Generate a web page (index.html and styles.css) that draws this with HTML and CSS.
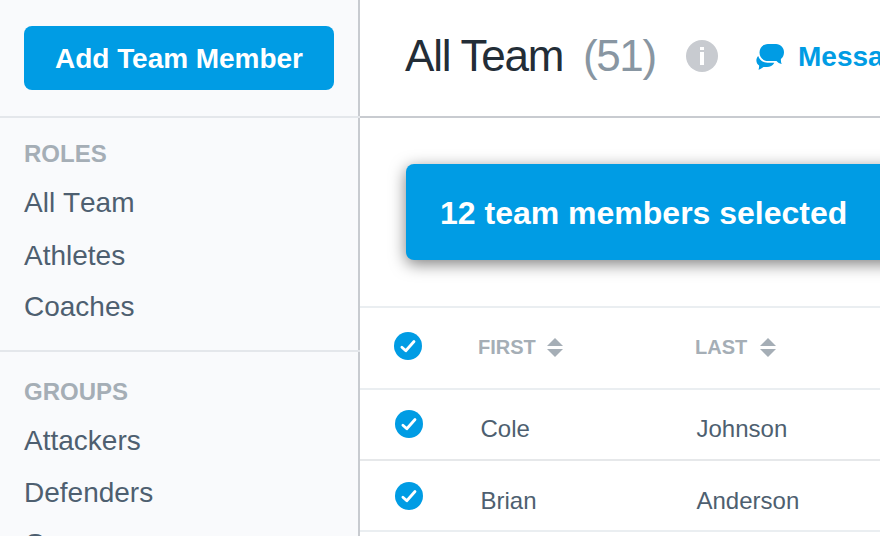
FILE: index.html
```html
<!DOCTYPE html>
<html lang="en">
<head>
<meta charset="utf-8">
<title>All Team</title>
<link rel="stylesheet" href="styles.css">
</head>
<body>
<svg class="defs" aria-hidden="true">
  <symbol id="check" viewBox="0 0 28 28"><circle cx="14" cy="14" r="14" fill="#009ce4"/><path d="M7.900 15.300l3.900 3.500 8.200-9.300" fill="none" stroke="#fff" stroke-width="2.800" stroke-linecap="round" stroke-linejoin="round"/></symbol>
  <symbol id="sort" viewBox="0 0 16 19"><path d="M8 0l8 8H0zM0 11h16l-8 8z" fill="#a5aeb6"/></symbol>
</svg>
<div class="app">
  <aside class="sidebar">
    <div class="add"><button class="add-button">Add Team Member</button></div>
    <section class="group roles">
      <h2>ROLES</h2>
      <a class="all">All Team</a>
      <a class="athletes">Athletes</a>
      <a>Coaches</a>
    </section>
    <section class="group">
      <h2>GROUPS</h2>
      <a>Attackers</a>
      <a class="defenders">Defenders</a>
      <a>Goons</a>
    </section>
  </aside>
  <main class="main">
    <header class="header">
      <h1>All Team</h1>
      <span class="count">(51)</span>
      <svg class="info" viewBox="0 0 32 32"><circle cx="16" cy="16" r="16" fill="#c8cbd0"/><path d="M14 7h4v3h-4zM14 12h4v13h-4z" fill="#fff"/></svg>
      <svg class="chat" viewBox="0 0 28 26"><path d="M12 0h8c4.600 0 8 3.700 8 8.300 0 2.900-1.200 5.300-3.100 6.800-.1 1.900.1 3.500.8 4.900-2.200-.4-3.900-1.500-5.200-3H12c-5 0-8.500-3.800-8.500-8.500S7 0 12 0z"/><path d="M2.200 12c1.300 4 4.800 6.700 9.300 6.700h6.800c-1.500 2.900-4.300 4.400-7.300 4.400H7.500c-1.400 1.200-3 2.200-5 2.700.5-1.500.7-2.900.6-4.300C.2 19.500-.8 15.200 2.200 12z"/></svg>
      <a class="message">Message</a>
    </header>
    <div class="notice"><div class="banner">12 team members selected</div></div>
    <div class="table">
      <div class="row head"><svg class="check"><use href="#check"/></svg><span class="first">FIRST<svg class="sort"><use href="#sort"/></svg></span><span class="last">LAST<svg class="sort"><use href="#sort"/></svg></span></div>
      <div class="row cole"><svg class="check"><use href="#check"/></svg><span class="first">Cole</span><span class="last">Johnson</span></div>
      <div class="row brian"><svg class="check"><use href="#check"/></svg><span class="first">Brian</span><span class="last">Anderson</span></div>
    </div>
  </main>
</div>
</body>
</html>
```
FILE: styles.css
```css
* { box-sizing: border-box; }
body { margin: 0; font-family: "Liberation Sans", Arial, sans-serif; background: #fff; color: #4e5f70; }
svg { display: block; flex: none; }
.defs { display: none; }
.app { display: flex; width: 880px; height: 536px; overflow: hidden; }

.sidebar { width: 360px; flex: none; overflow: hidden; background: linear-gradient(#c8cbd0, #c8cbd0) right / 2px 100% no-repeat #f9fafc; }
.add { height: 118px; padding: 26px 26px 0 24px; border-bottom: 2px solid #e4e7eb; }
.add-button { display: block; width: 310px; height: 64px; padding: 2px 0 0; border: 0; border-radius: 8px; background: #009ce4; color: #fff; font: bold 28px/62px "Liberation Sans", Arial, sans-serif; letter-spacing: -0.04px; }
.group { padding: 20px 24px 0; }
.roles { height: 234px; padding-top: 16px; border-bottom: 2px solid #e4e7eb; }
.group h2 { margin: 0 0 3px; font-size: 24px; line-height: 40px; color: #a5aeb6; }
.group a { display: block; font-size: 28px; line-height: 51px; height: 51px; white-space: nowrap; }
.group .all { height: 53px; font-kerning: none; }
.group .defenders { margin-top: 1px; }

.main { flex: 1; min-width: 0; overflow: hidden; }
.header { display: flex; height: 118px; padding-left: 45px; border-bottom: 2px solid #c8cbd0; white-space: nowrap; overflow: hidden; }
h1 { width: 178px; margin: 0; flex: none; font-weight: normal; font-size: 44px; line-height: 112px; letter-spacing: -1.2px; color: #232d37; }
.count { width: 103px; flex: none; font-size: 44px; line-height: 112px; letter-spacing: -1.4px; color: #8896a2; }
.info { width: 32px; height: 32px; margin-top: 40px; }
.chat { width: 28px; height: 26px; margin: 44px 14px 0 38px; }
.chat path { fill: #009ce4; }
.message { font-weight: bold; font-size: 28px; line-height: 114px; color: #009ce4; }

.notice { padding: 46px 0 46px 46px; }
.banner { width: 520px; height: 96px; padding-left: 34px; border-radius: 8px; background: #009ce4; box-shadow: 0 4px 16px rgba(0, 0, 0, .5); color: #fff; font-weight: bold; font-size: 32px; line-height: 98px; white-space: nowrap; }

.table { border-top: 2px solid #eaeef1; }
.row { display: flex; height: 71px; padding-left: 35px; border-bottom: 2px solid #eaeef1; font-size: 24px; line-height: 78px; }
.head { height: 82px; padding-left: 34px; font-weight: bold; font-size: 20px; color: #a5aeb6; }
.cole { border-color: #e6e8ea; }
.brian { line-height: 80px; }
.check { width: 28px; height: 28px; margin: 20px 57.5px 0 0; }
.brian .check { margin-top: 21px; }
.head .check { margin: 24px 56px 0 0; }
.first { width: 216px; flex: none; }
.head .first { width: 217px; }
.head span { display: flex; }
.sort { width: 16px; height: 19px; margin: 30px 0 0 11px; }
.last .sort { margin-left: 13px; }
```
